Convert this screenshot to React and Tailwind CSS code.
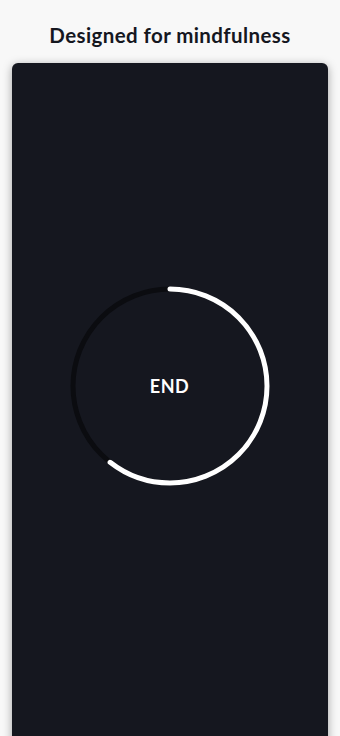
import React from "react";

function Ring() {
  const r = 97;
  const c = 2 * Math.PI * r;
  const progress = 0.605;
  return (
    <div className="relative w-[200px] h-[200px]">
      <svg width="200" height="200" viewBox="0 0 200 200" className="absolute inset-0">
        <circle cx="100" cy="100" r={r} fill="none" stroke="#0b0c10" strokeWidth="5" />
        <circle
          cx="100"
          cy="100"
          r={r}
          fill="none"
          stroke="#ffffff"
          strokeWidth="5"
          strokeLinecap="round"
          strokeDasharray={`${c * progress} ${c}`}
          transform="rotate(-90 100 100)"
        />
      </svg>
      <div className="absolute inset-0 flex items-center justify-center">
        <span className="text-white text-[18px] font-bold tracking-[0.5px] font-['Lato',sans-serif]">END</span>
      </div>
    </div>
  );
}

export default function App() {
  return (
    <div className="w-[340px] h-[736px] overflow-hidden bg-[#f8f8f8] flex flex-col items-center font-['Lato',sans-serif]">
      <h1 className="mt-[21px] text-[20.5px] leading-[28px] font-bold text-[#15171f] tracking-[0.4px]">
        Designed for mindfulness
      </h1>
      <div className="mt-[14px] w-[316px] h-[700px] shrink-0 rounded-[6px] bg-[#15171f] shadow-[0_2px_10px_rgba(0,0,0,0.35)] flex flex-col items-center">
        <div className="mt-[223px] -ml-[1px]">
          <Ring />
        </div>
      </div>
    </div>
  );
}
